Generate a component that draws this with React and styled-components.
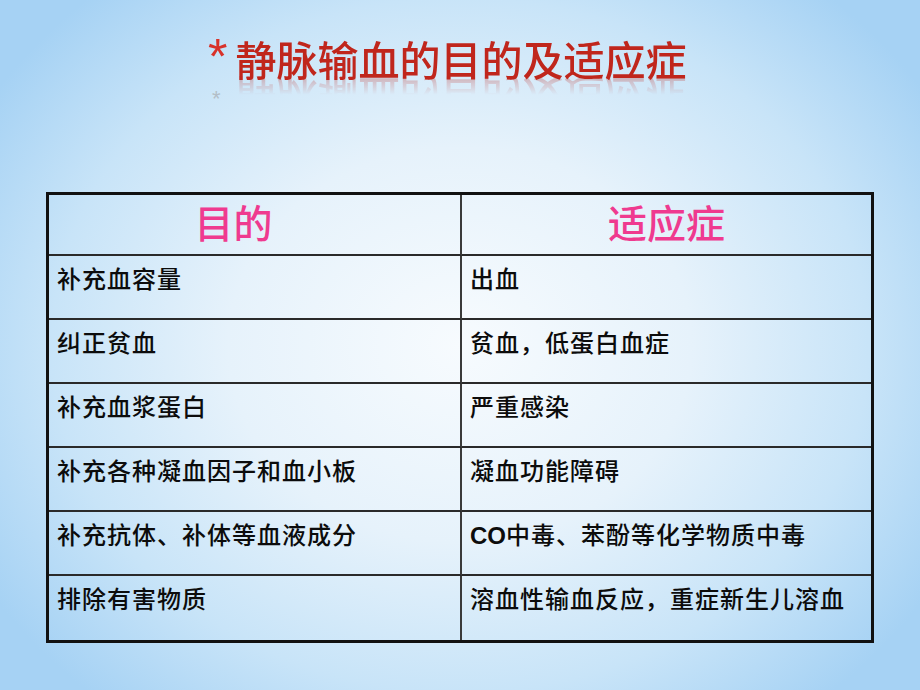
import React from 'react'
import styled, { createGlobalStyle } from 'styled-components'

const GlobalStyle = createGlobalStyle`
    html, body {
        margin: 0;
        padding: 0;
    }
    body {
        font-family: "Noto Sans CJK SC", "Liberation Sans", sans-serif;
    }
`;

function App() {
    const rows = [
        { goal: '补充血容量', use: '出血' },
        { goal: '纠正贫血', use: '贫血，低蛋白血症' },
        { goal: '补充血浆蛋白', use: '严重感染' },
        { goal: '补充各种凝血因子和血小板', use: '凝血功能障碍' },
        { goal: '补充抗体、补体等血液成分', use: <><Latin>CO</Latin>中毒、苯酚等化学物质中毒</> },
        { goal: '排除有害物质', use: '溶血性输血反应，重症新生儿溶血' },
    ]

    return (
        <>
            <GlobalStyle />
            <Slide>
                <TitleBlock>
                    <Title>
                        <Star>*</Star>
                        <span>静脉输血的目的及适应症</span>
                    </Title>
                    <GhostStar>*</GhostStar>
                </TitleBlock>
                <Table>
                    <HeadCell $shift={42}>目的</HeadCell>
                    <HeadCell $last>适应症</HeadCell>
                    {rows.map((row, i) => (
                        <React.Fragment key={i}>
                            <Cell>{row.goal}</Cell>
                            <Cell $last>{row.use}</Cell>
                        </React.Fragment>
                    ))}
                </Table>
            </Slide>
        </>
    )
}

const Slide = styled.div`
    width: 920px;
    height: 690px;
    overflow: hidden;
    box-sizing: border-box;
    padding: 0 46px 0 46px;
    display: flex;
    flex-direction: column;
    background:
        radial-gradient(ellipse 60% 68% at 50% 50%, #f7fbfe 0%, #e6f2fb 42%, #c8e4f8 74%, #a6d2f4 100%);
`;

const TitleBlock = styled.div`
    height: 192px;
    box-sizing: border-box;
    padding: 31px 0 0 162px;
    display: flex;
    flex-direction: column;
`;

const Title = styled.h1`
    margin: 0;
    display: flex;
    align-items: baseline;
    gap: 8px;
    font-size: 41px;
    line-height: 54px;
    font-weight: 500;
    color: #c0261c;
    letter-spacing: 0;
    -webkit-box-reflect: below -16px linear-gradient(transparent 55%, rgba(255, 255, 255, 0.4));
`;

const Star = styled.span`
    font-family: "Liberation Sans", sans-serif;
    font-size: 50px;
    color: #d8322a;
    position: relative;
    top: -2px;
`;

const GhostStar = styled.span`
    margin: 2px 0 0 4px;
    font-family: "Liberation Sans", sans-serif;
    font-size: 22px;
    line-height: 22px;
    color: #b3bec7;
`;

const Table = styled.div`
    width: 828px;
    box-sizing: border-box;
    border: 3px solid #111;
    display: grid;
    grid-template-columns: 413px 1fr;
    grid-template-rows: 61px repeat(6, 64px);
`;

const HeadCell = styled.div`
    display: flex;
    align-items: center;
    justify-content: center;
    padding-right: ${p => p.$shift || 0}px;
    padding-bottom: 8px;
    font-size: 39px;
    font-weight: 500;
    color: #ef3a8f;
    border-right: ${p => p.$last ? 'none' : '2px solid #3a3a3a'};
    border-bottom: 2px solid #2a2a2a;
`;

const Cell = styled.div`
    box-sizing: border-box;
    padding: 5px 0 0 8px;
    font-size: 24px;
    line-height: 34px;
    font-weight: 500;
    letter-spacing: 1px;
    color: #0c0c0c;
    white-space: nowrap;
    border-right: ${p => p.$last ? 'none' : '2px solid #3a3a3a'};
    border-bottom: 2px solid #2a2a2a;
    &:nth-last-child(-n+2) {
        border-bottom: none;
    }
`;

const Latin = styled.span`
    font-family: "Liberation Sans", sans-serif;
    font-weight: 700;
    letter-spacing: 0;
`;

export default App
